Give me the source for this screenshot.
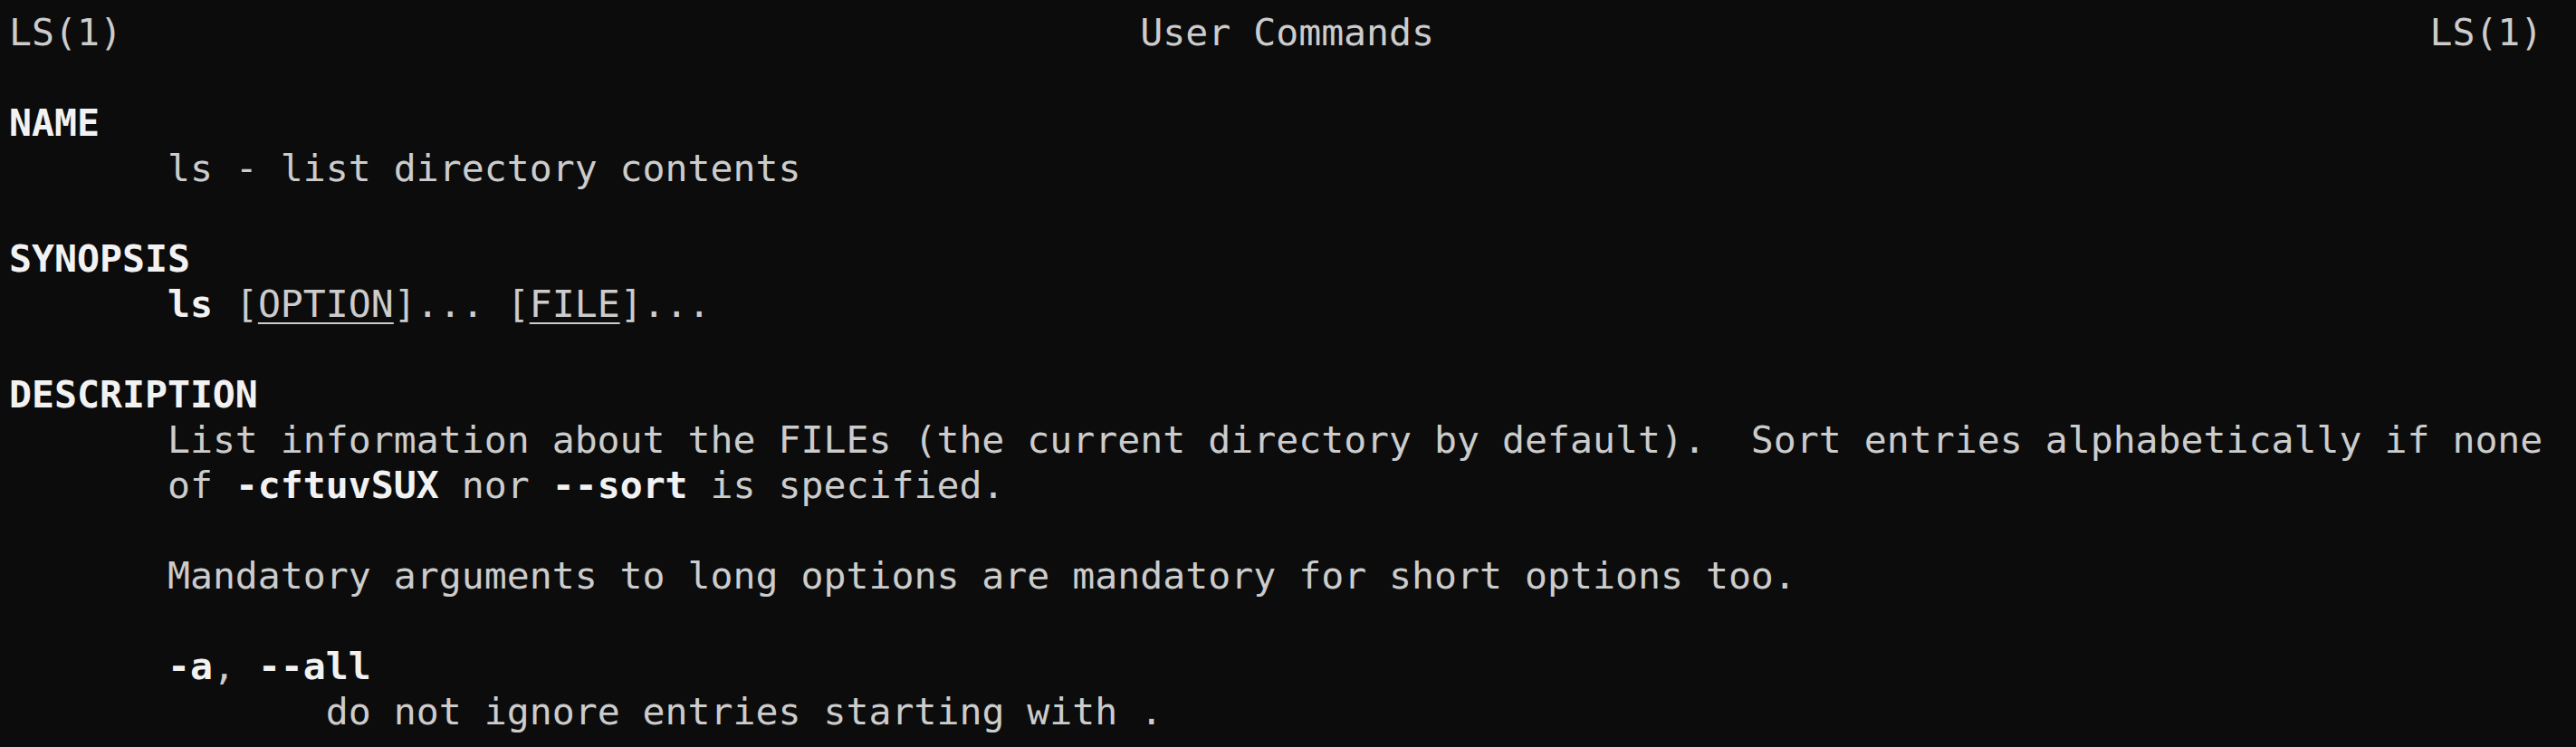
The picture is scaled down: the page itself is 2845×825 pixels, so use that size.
import React from "react";

const B = ({ children }) => (
  <span className="font-bold text-[#f2f2f2]">{children}</span>
);

const U = ({ children }) => (
  <span className="underline decoration-2 underline-offset-[6px]">{children}</span>
);

function Line({ children }) {
  return <div className="h-[50px] leading-[50px]">{children || "\u00a0"}</div>;
}

export default function App() {
  const indent = "       ";
  const header =
    "LS(1)" + " ".repeat(45) + "User Commands" + " ".repeat(44) + "LS(1)";

  return (
    <div
      className="min-h-screen w-full bg-[#0c0c0c] text-[#cccccc] pl-[10px] pt-[11px] overflow-hidden whitespace-pre text-[41.5px]"
      style={{ fontFamily: '"DejaVu Sans Mono", "Liberation Mono", monospace' }}
    >
      <Line>{header}</Line>
      <Line />
      <Line>
        <B>NAME</B>
      </Line>
      <Line>{indent}ls - list directory contents</Line>
      <Line />
      <Line>
        <B>SYNOPSIS</B>
      </Line>
      <Line>
        {indent}
        <B>ls</B> [<U>OPTION</U>]... [<U>FILE</U>]...
      </Line>
      <Line />
      <Line>
        <B>DESCRIPTION</B>
      </Line>
      <Line>
        {indent}List information about the FILEs (the current directory by
        default).  Sort entries alphabetically if none
      </Line>
      <Line>
        {indent}of <B>-cftuvSUX</B> nor <B>--sort</B> is specified.
      </Line>
      <Line />
      <Line>
        {indent}Mandatory arguments to long options are mandatory for short
        options too.
      </Line>
      <Line />
      <Line>
        {indent}
        <B>-a</B>, <B>--all</B>
      </Line>
      <Line>{indent}{indent}do not ignore entries starting with .</Line>
    </div>
  );
}
